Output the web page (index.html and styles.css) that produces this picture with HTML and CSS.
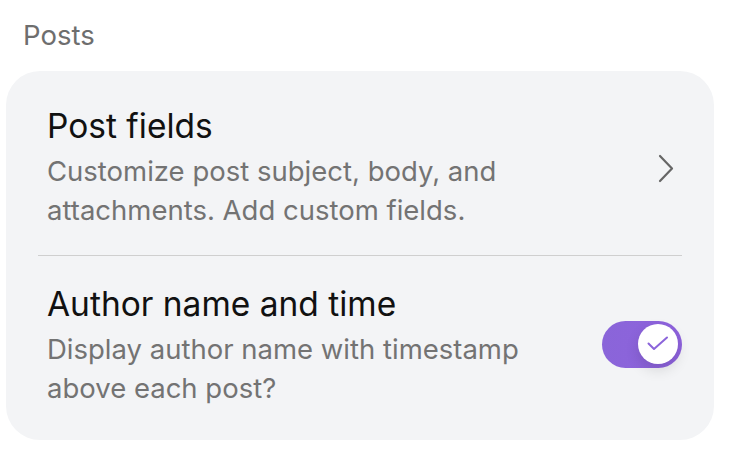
FILE: index.html
```html
<!DOCTYPE html>
<html>
<head>
<meta charset="utf-8">
<link rel="stylesheet" href="styles.css">
</head>
<body>
<div class="page">
  <div class="section-label">Posts</div>
  <div class="card">
    <div class="row row1">
      <div class="text">
        <div class="title">Post fields</div>
        <div class="desc">Customize post subject, body, and attachments. Add custom fields.</div>
      </div>
      <svg class="chevron" width="16" height="29" viewBox="0 0 16 29"><path d="M2 2 L14 14.5 L2 27" fill="none" stroke="#666" stroke-width="2.2" stroke-linecap="round" stroke-linejoin="round"/></svg>
    </div>
    <div class="divider"></div>
    <div class="row row2">
      <div class="text">
        <div class="title">Author name and time</div>
        <div class="desc">Display author name with timestamp above each post?</div>
      </div>
      <div class="toggle">
        <div class="knob">
          <svg width="22" height="16" viewBox="0 0 22 16"><path d="M1.5 7.5 L7 13 L20 1.5" fill="none" stroke="#8b64da" stroke-width="2" stroke-linecap="round" stroke-linejoin="round"/></svg>
        </div>
      </div>
    </div>
  </div>
</div>
</body>
</html>
```
FILE: styles.css
```css
* { box-sizing: border-box; }
html, body { margin: 0; padding: 0; background: #fff; }
body { font-family: Inter, "Noto Sans", sans-serif; width: 732px; height: 458px; overflow: hidden; }
.page { padding: 19px 18px 0 6px; }
.section-label { font-size: 27.5px; line-height: 32px; color: #6e6e6e; padding-left: 17px; margin-bottom: 20px; }
.card { width: 708px; height: 369px; background: #f3f4f6; border-radius: 34px; padding: 0 32px; }
.row { display: flex; align-items: center; justify-content: space-between; padding-left: 9px; }
.row1 { padding-top: 35px; padding-bottom: 25px; }
.row2 { padding-top: 28px; }
.text { width: 520px; }
.title { font-size: 33.5px; line-height: 40px; color: #111; margin-bottom: 6px; }
.desc { font-size: 27.5px; line-height: 39px; color: #737373; }
.chevron { margin-right: 8px; }
.divider { height: 1px; background: #cfcfcf; }
.toggle { width: 80px; height: 47px; border-radius: 24px; background: linear-gradient(90deg, #8a65d9, #8e62dd); position: relative; margin-top: -4px; }
.knob { position: absolute; right: 4px; top: 3.5px; width: 40px; height: 40px; border-radius: 50%; background: #fff; display: flex; align-items: center; justify-content: center; box-shadow: 0 6px 14px rgba(0,0,0,0.12); }
```
